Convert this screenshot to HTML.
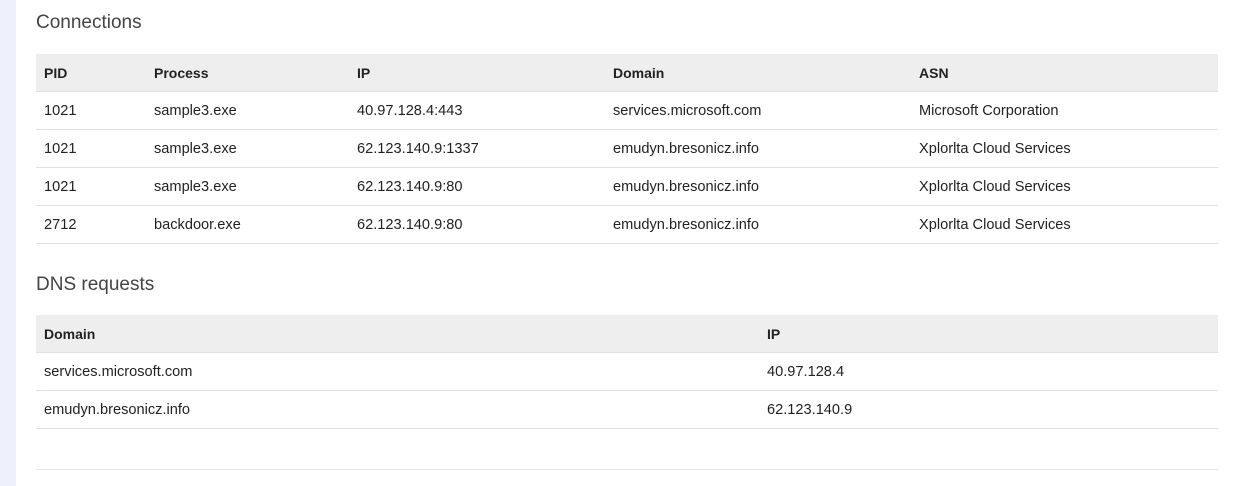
<!DOCTYPE html>
<html><head><style>
body{margin:0;width:1237px;height:486px;background:#fff;font-family:"Liberation Sans",sans-serif;color:#333;position:relative;overflow:hidden}
.side{position:absolute;left:0;top:0;width:16px;height:486px;background:#eef1fb}
h2{position:absolute;left:36px;margin:0;font-weight:normal;font-size:19px;color:#444}
table{position:absolute;left:36px;width:1182px;border-collapse:collapse;font-size:14.6px;table-layout:fixed}
th{background:#eeeeee;text-align:left;font-weight:bold;height:37px;padding:0 8px;color:#222;border-bottom:1px solid #dde0e6;font-size:14px}
td{height:37px;padding:0 8px;border-bottom:1px solid #dde0e6;color:#222}
.end{position:absolute;left:36px;top:469px;width:1182px;height:1px;background:#e6e6e6}
</style></head><body>
<div class="side"></div>
<h2 style="top:12px">Connections</h2>
<table style="top:54px">
<colgroup><col style="width:110px"><col style="width:203px"><col style="width:256px"><col style="width:306px"><col></colgroup>
<tr><th>PID</th><th>Process</th><th>IP</th><th>Domain</th><th>ASN</th></tr>
<tr><td>1021</td><td>sample3.exe</td><td>40.97.128.4:443</td><td>services.microsoft.com</td><td>Microsoft Corporation</td></tr>
<tr><td>1021</td><td>sample3.exe</td><td>62.123.140.9:1337</td><td>emudyn.bresonicz.info</td><td>Xplorlta Cloud Services</td></tr>
<tr><td>1021</td><td>sample3.exe</td><td>62.123.140.9:80</td><td>emudyn.bresonicz.info</td><td>Xplorlta Cloud Services</td></tr>
<tr><td>2712</td><td>backdoor.exe</td><td>62.123.140.9:80</td><td>emudyn.bresonicz.info</td><td>Xplorlta Cloud Services</td></tr>
</table>
<h2 style="top:274px">DNS requests</h2>
<table style="top:315px">
<colgroup><col style="width:723px"><col></colgroup>
<tr><th>Domain</th><th>IP</th></tr>
<tr><td>services.microsoft.com</td><td>40.97.128.4</td></tr>
<tr><td>emudyn.bresonicz.info</td><td>62.123.140.9</td></tr>
</table>
<div class="end"></div>
</body></html>
